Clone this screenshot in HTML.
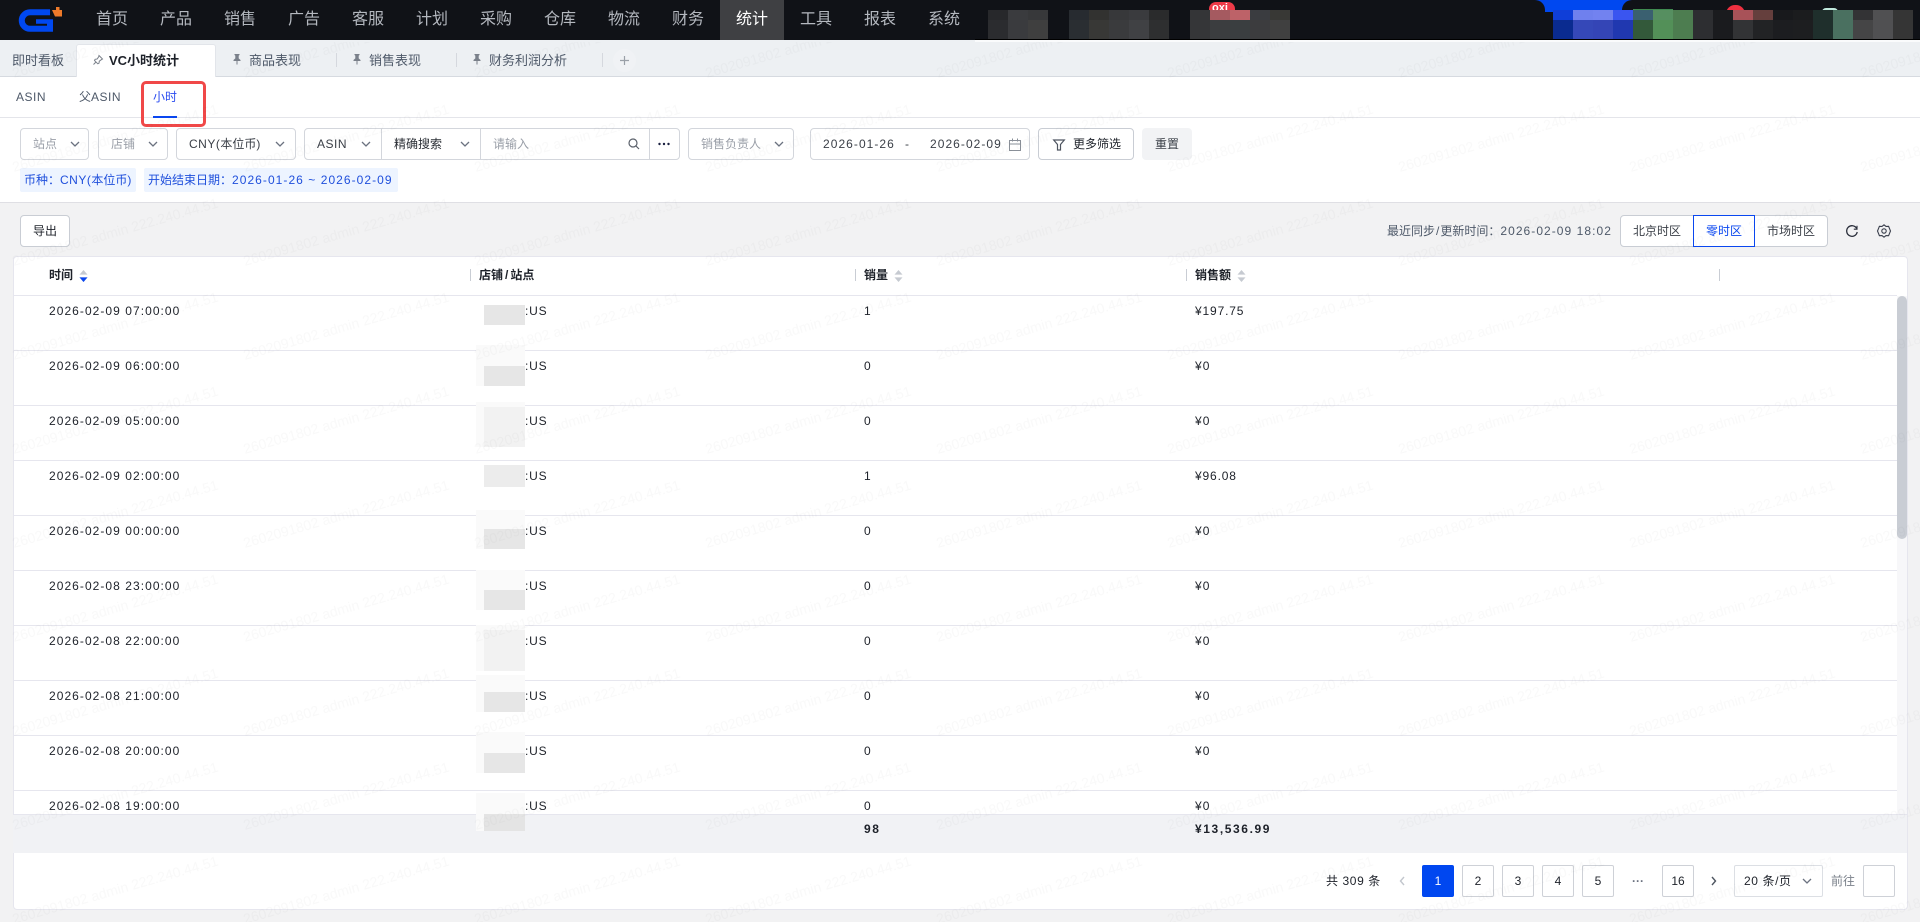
<!DOCTYPE html>
<html lang="zh">
<head>
<meta charset="utf-8">
<title>VC小时统计</title>
<style>
html,body{margin:0;padding:0;width:1920px;height:922px;overflow:hidden;background:#f2f2f3}
body{position:relative;font-family:"Liberation Sans","Noto Sans CJK SC",sans-serif;font-size:12px;color:#1d2129}
.a{position:absolute;box-sizing:border-box}
.t{position:absolute;white-space:nowrap;line-height:16px;font-size:12px}
.m{letter-spacing:1.05px}
.l{letter-spacing:.5px}
.nav{position:absolute;top:0;width:64px;height:40px;line-height:40px;text-align:center;font-size:16px;color:#b4b8bf}
.box{position:absolute;box-sizing:border-box;height:32px;top:128px;background:#fff;border:1px solid #d3d6dc;border-radius:4px}
.ph{color:#9a9fa8}
.tab{position:absolute;top:53px;white-space:nowrap;font-size:13px;line-height:16px;color:#4e5969}
.dv{position:absolute;top:53px;width:1px;height:14px;background:#d5d8de}
.hl{position:absolute;left:13px;width:1884px;height:1px;background:#e6e6ee}
.hd{position:absolute;white-space:nowrap;top:267px;font-weight:700;line-height:16px;font-size:12px;color:#1d2129}
.cd{position:absolute;top:269px;width:1px;height:12px;background:#c9cdd4}
.pg{position:absolute;box-sizing:border-box;top:865px;width:32px;height:32px;line-height:30px;text-align:center;border:1px solid #ced1d7;border-radius:2px;background:#fff;font-size:12px;color:#1d2129}
.g{position:absolute;left:484px;width:41px;height:20px;background:#e6e6e6}
.p{position:absolute;left:476px;width:49px;background:#fafafa}
.u{letter-spacing:.8px}
.q{position:absolute;height:10px;top:10px;width:20px}
.r{position:absolute;height:20px;top:20px;width:20px}
svg{position:absolute;overflow:visible}
</style>
</head>
<body>
<svg width="0" height="0" style="position:absolute">
<defs>
<symbol id="c" viewBox="0 0 12 12"><path d="M2 4l4 4 4-4" fill="none" stroke="#6b7280" stroke-width="1.3"/></symbol>
<symbol id="pin" viewBox="0 0 12 12"><path d="M3.5 1h5v1l-.8.6V5.4L9.5 7v1h-3v3.5h-1V8h-3V7l1.8-1.6V2.6L3.5 2z" fill="#7a808a"/></symbol>
<symbol id="so" viewBox="0 0 9 12"><path d="M4.5 0L8.5 4.6H.5z" fill="#c6cad1"/><path d="M4.5 12L8.5 7.4H.5z" fill="#c6cad1"/></symbol>
</defs>
</svg>

<!-- top nav -->
<div class="a" style="left:0;top:0;width:1920px;height:40px;background:#101217"></div>
<svg style="left:0;top:0" width="80" height="40"><path d="M50 12.3H30a8.25 8.25 0 0 0 0 16.5H50V21" fill="none" stroke="#0048f0" stroke-width="6"/><path d="M36 21.5H53" fill="none" stroke="#0048f0" stroke-width="4.5"/><path d="M56 7h3.5v3h2.5v6.5H55L52 10h4z" fill="#ee7a2a"/></svg>
<div class="nav" style="left:80px">首页</div>
<div class="nav" style="left:144px">产品</div>
<div class="nav" style="left:208px">销售</div>
<div class="nav" style="left:272px">广告</div>
<div class="nav" style="left:336px">客服</div>
<div class="nav" style="left:400px">计划</div>
<div class="nav" style="left:464px">采购</div>
<div class="nav" style="left:528px">仓库</div>
<div class="nav" style="left:592px">物流</div>
<div class="nav" style="left:656px">财务</div>
<div class="nav" style="left:720px;background:#3f4043;color:#fff">统计</div>
<div class="nav" style="left:784px">工具</div>
<div class="nav" style="left:848px">报表</div>
<div class="nav" style="left:912px">系统</div>

<!-- mosaic area -->
<div class="q" style="left:988px;background:#27282b"></div><div class="r" style="left:988px;background:#2b2c2f"></div>
<div class="q" style="left:1008px;background:#3a3b3e"></div><div class="r" style="left:1008px;background:#3a3b3e"></div>
<div class="q" style="left:1028px;background:#37383a"></div><div class="r" style="left:1028px;background:#3f3f3f"></div>
<div class="q" style="left:1069px;background:#272b30"></div><div class="r" style="left:1069px;background:#2a2e32"></div>
<div class="q" style="left:1089px;background:#323230"></div><div class="r" style="left:1089px;background:#383836"></div>
<div class="q" style="left:1109px;background:#37383a"></div><div class="r" style="left:1109px;background:#3a3b3d"></div>
<div class="q" style="left:1129px;background:#3a3b3e"></div><div class="r" style="left:1129px;background:#404144"></div>
<div class="q" style="left:1149px;background:#2a2b2c"></div><div class="r" style="left:1149px;background:#2e2f30"></div>
<div class="a" style="left:1209px;top:2px;width:26px;height:12px;background:#ee3a48;border-radius:7px 7px 0 0"></div>
<div class="t" style="left:1212px;top:2px;color:#fff;font-weight:700;font-size:11px;line-height:12px">oxi</div>
<div class="q" style="left:1190px;background:#343537"></div><div class="r" style="left:1190px;background:#353638"></div>
<div class="q" style="left:1210px;background:#a55a60"></div><div class="r" style="left:1210px;background:#3b3d3f"></div>
<div class="q" style="left:1230px;background:#bd6268"></div><div class="r" style="left:1230px;background:#3a3e40"></div>
<div class="q" style="left:1250px;background:#3a3c40"></div><div class="r" style="left:1250px;background:#3c3c3e"></div>
<div class="q" style="left:1270px;background:#383835"></div><div class="r" style="left:1270px;background:#404040"></div>

<div class="a" style="left:1530px;top:0;width:110px;height:12px;background:#0048f0"></div>
<div class="a" style="left:1520px;top:0;width:25px;height:14px;background:#101217;border-radius:0 10px 0 0"></div>
<div class="a" style="left:1622px;top:0;width:30px;height:14px;background:#101217;border-radius:10px 0 0 0"></div>
<div class="a" style="left:1633px;top:9px;width:40px;height:2px;background:#3f8a50"></div>
<div class="a" style="left:1726px;top:5px;width:19px;height:10px;background:#ee3040;border-radius:9px 9px 0 0"></div>
<div class="a" style="left:1822px;top:8px;width:16px;height:4px;background:#bfe8dc;border-radius:8px 8px 0 0"></div>

<div class="q" style="left:1553px;background:#0f3ed8"></div><div class="r" style="left:1553px;background:#0a2b90"></div>
<div class="q" style="left:1573px;background:#6f80ee"></div><div class="r" style="left:1573px;background:#3548b8"></div>
<div class="q" style="left:1593px;background:#7282f0"></div><div class="r" style="left:1593px;background:#3445b6"></div>
<div class="q" style="left:1613px;background:#3a55f0"></div><div class="r" style="left:1613px;background:#2038b0"></div>
<div class="q" style="left:1633px;background:#3a6070"></div><div class="r" style="left:1633px;background:#33593a"></div>
<div class="q" style="left:1653px;background:#568f60"></div><div class="r" style="left:1653px;background:#539058"></div>
<div class="q" style="left:1673px;background:#4d7d50"></div><div class="r" style="left:1673px;background:#4d7d50"></div>
<div class="q" style="left:1693px;background:#2d2e31"></div><div class="r" style="left:1693px;background:#2d2e31"></div>
<div class="q" style="left:1713px;background:#1a1b1e"></div><div class="r" style="left:1713px;background:#1a1b1e"></div>
<div class="q" style="left:1733px;background:#a85258"></div><div class="r" style="left:1733px;background:#323335"></div>
<div class="q" style="left:1753px;background:#653f3d"></div><div class="r" style="left:1753px;background:#222325"></div>
<div class="q" style="left:1773px;background:#18191c"></div><div class="r" style="left:1773px;background:#1c1d20"></div>
<div class="q" style="left:1793px;background:#1b1c1e"></div><div class="r" style="left:1793px;background:#1d1e20"></div>
<div class="q" style="left:1813px;background:#1f2f2c"></div><div class="r" style="left:1813px;background:#1f2f2c"></div>
<div class="q" style="left:1833px;background:#4a7060"></div><div class="r" style="left:1833px;background:#4a7060"></div>
<div class="q" style="left:1853px;background:#333335"></div><div class="r" style="left:1853px;background:#454546"></div>
<div class="q" style="left:1873px;background:#505052"></div><div class="r" style="left:1873px;background:#505052"></div>
<div class="q" style="left:1893px;background:#353535"></div><div class="r" style="left:1893px;background:#353535"></div>
<div class="a" style="left:975px;top:39px;width:945px;height:1px;background:#000"></div>

<!-- tab bar -->
<div class="a" style="left:0;top:40px;width:1920px;height:37px;background:#edf0f3;border-bottom:1px solid #d6dae0"></div>
<div class="a" style="left:975px;top:40px;width:945px;height:2px;background:#fafbfc"></div>
<div class="tab" style="left:12px">即时看板</div>
<div class="a" style="left:76px;top:44px;width:140px;height:34px;background:#fff;border:1px solid #e2e5ea;border-bottom:none;border-radius:3px 3px 0 0"></div>
<svg style="left:92px;top:54px" width="12" height="12" viewBox="0 0 12 12"><path d="M7 1.5l3.5 3.5-1 .6-2.2 1.6-.3 2-1.2.6L2.5 6.5l.6-1.2 2-.3 1.6-2.2zM4 8l-2.5 2.5" fill="none" stroke="#7a808a" stroke-width="1"/></svg>
<div class="tab" style="left:109px;color:#1d2129;font-weight:700">VC小时统计</div>
<svg style="left:231px;top:53px" width="12" height="12"><use href="#pin"/></svg>
<div class="tab" style="left:249px">商品表现</div>
<div class="dv" style="left:336px"></div>
<svg style="left:351px;top:53px" width="12" height="12"><use href="#pin"/></svg>
<div class="tab" style="left:369px">销售表现</div>
<div class="dv" style="left:456px"></div>
<svg style="left:471px;top:53px" width="12" height="12"><use href="#pin"/></svg>
<div class="tab" style="left:489px">财务利润分析</div>
<div class="dv" style="left:602px"></div>
<div class="a" style="left:613px;top:49px;width:23px;height:23px;border-radius:12px;background:#f0f2f5"></div>
<svg style="left:620px;top:56px" width="9" height="9"><path d="M4.5 0v9M0 4.5h9" stroke="#9aa0a8" stroke-width="1.2"/></svg>

<!-- sub tabs + filter area -->
<div class="a" style="left:0;top:77px;width:1920px;height:126px;background:#fff;border-bottom:1px solid #dfdfe4"></div>
<div class="a" style="left:0;top:117px;width:1920px;height:1px;background:#e4e5ea"></div>
<div class="t l" style="left:16px;top:89px;color:#4e5969">ASIN</div>
<div class="t" style="left:79px;top:89px;color:#4e5969">父<span class="l">ASIN</span></div>
<div class="t" style="left:153px;top:89px;color:#2b4cf0">小时</div>
<div class="a" style="left:153px;top:116px;width:24px;height:2px;background:#0a47f0"></div>
<div class="a" style="left:141px;top:81px;width:65px;height:46px;border:3px solid #f04848;border-radius:5px"></div>

<div class="box" style="left:20px;width:69px"></div>
<div class="t ph" style="left:33px;top:136px">站点</div>
<svg style="left:69px;top:138px" width="12" height="12"><use href="#c"/></svg>
<div class="box" style="left:98px;width:70px"></div>
<div class="t ph" style="left:111px;top:136px">店铺</div>
<svg style="left:147px;top:138px" width="12" height="12"><use href="#c"/></svg>
<div class="box" style="left:176px;width:120px"></div>
<div class="t" style="left:189px;top:136px;color:#3a3f47"><span class="l">CNY(</span>本位币<span class="l">)</span></div>
<svg style="left:274px;top:138px" width="12" height="12"><use href="#c"/></svg>

<div class="box" style="left:304px;width:376px"></div>
<div class="a" style="left:381px;top:128px;width:1px;height:32px;background:#d3d6dc"></div>
<div class="a" style="left:480px;top:128px;width:1px;height:32px;background:#d3d6dc"></div>
<div class="a" style="left:649px;top:128px;width:1px;height:32px;background:#d3d6dc"></div>
<div class="t l" style="left:317px;top:136px;color:#3a3f47">ASIN</div>
<svg style="left:360px;top:138px" width="12" height="12"><use href="#c"/></svg>
<div class="t" style="left:394px;top:136px;color:#2a2e35">精确搜索</div>
<svg style="left:459px;top:138px" width="12" height="12"><use href="#c"/></svg>
<div class="t ph" style="left:493px;top:136px">请输入</div>
<svg style="left:628px;top:138px" width="12" height="12" viewBox="0 0 12 12"><circle cx="5" cy="5" r="4" fill="none" stroke="#5a606a" stroke-width="1.2"/><path d="M8 8l3 3" stroke="#5a606a" stroke-width="1.2"/></svg>
<svg style="left:658px;top:142px" width="12" height="4"><circle cx="1.5" cy="2" r="1.2" fill="#1a2040"/><circle cx="6" cy="2" r="1.2" fill="#1a2040"/><circle cx="10.5" cy="2" r="1.2" fill="#1a2040"/></svg>

<div class="box" style="left:688px;width:106px"></div>
<div class="t ph" style="left:701px;top:136px">销售负责人</div>
<svg style="left:773px;top:138px" width="12" height="12"><use href="#c"/></svg>

<div class="box" style="left:810px;width:220px"></div>
<div class="t m" style="left:823px;top:136px;color:#3a3f47">2026-01-26</div>
<div class="t" style="left:905px;top:136px;color:#3a3f47">-</div>
<div class="t m" style="left:930px;top:136px;color:#3a3f47">2026-02-09</div>
<svg style="left:1009px;top:138px" width="12" height="13" viewBox="0 0 12 13"><path d="M.5 2.5h11v10H.5zM.5 6h11M3.5.5v3M8.5.5v3" fill="none" stroke="#8a9099" stroke-width="1"/></svg>

<div class="box" style="left:1038px;width:96px;border-color:#c9cdd4"></div>
<svg style="left:1053px;top:139px" width="12" height="12" viewBox="0 0 12 12"><path d="M.7 1h10.6L7.5 5.5V11h-3V5.5z" fill="none" stroke="#4e5560" stroke-width="1.2"/></svg>
<div class="t" style="left:1073px;top:136px;color:#1d2129">更多筛选</div>
<div class="a" style="left:1142px;top:128px;width:50px;height:32px;background:#f2f3f5;border-radius:4px"></div>
<div class="t" style="left:1155px;top:136px;color:#3a3f47">重置</div>

<div class="a" style="left:20px;top:168px;width:116px;height:24px;background:#edf4ff;border-radius:2px"></div>
<div class="t" style="left:24px;top:172px;color:#1f4fdc">币种：<span class="l">CNY(</span>本位币<span class="l">)</span></div>
<div class="a" style="left:144px;top:168px;width:254px;height:24px;background:#edf4ff;border-radius:2px"></div>
<div class="t" style="left:148px;top:172px;color:#1f4fdc">开始结束日期：<span class="m">2026-01-26 ~ 2026-02-09</span></div>

<!-- toolbar -->
<div class="a" style="left:20px;top:215px;width:50px;height:32px;background:#fff;border:1px solid #c9cdd4;border-radius:4px"></div>
<div class="t" style="left:33px;top:223px;color:#1d2129">导出</div>
<div class="t" style="left:1387px;top:223px;color:#4e5969">最近同步<span style="margin:0 1px">/</span>更新时间：<span class="m">2026-02-09 18:02</span></div>
<div class="a" style="left:1620px;top:215px;width:208px;height:32px;background:#fff;border:1px solid #c9cdd4;border-radius:4px"></div>
<div class="a" style="left:1693px;top:215px;width:62px;height:32px;border:1px solid #0a47f0"></div>
<div class="t" style="left:1633px;top:223px;color:#3a3f47">北京时区</div>
<div class="t" style="left:1706px;top:223px;color:#0a47f0">零时区</div>
<div class="t" style="left:1767px;top:223px;color:#3a3f47">市场时区</div>
<svg style="left:1846px;top:225px" width="12" height="12" viewBox="0 0 12 12"><path d="M10.6 3.4A5.3 5.3 0 1 0 11.2 7" fill="none" stroke="#2a2e3a" stroke-width="1.3"/><path d="M11 .8v3.4H7.8" fill="none" stroke="#2a2e3a" stroke-width="1.1"/></svg>
<svg style="left:1877px;top:224px" width="14" height="14" viewBox="0 0 14 14"><path d="M7 .8l2 1.6 2.6-.1.9 2.3 1 2.4-1 2.4-.9 2.3-2.6-.1-2 1.6-2-1.6-2.6.1-.9-2.3-1-2.4 1-2.4.9-2.3 2.6.1z" fill="none" stroke="#3a3f4c" stroke-width="1.1"/><circle cx="7" cy="7" r="2.2" fill="none" stroke="#3a3f4c" stroke-width="1.1"/></svg>

<!-- table card -->
<div class="a" style="left:13px;top:256px;width:1895px;height:654px;background:#fff;border:1px solid #e6e6ee;border-radius:4px"></div>
<div class="hd" style="left:49px">时间</div>
<svg style="left:79px;top:270px" width="9" height="12"><use href="#so"/><path d="M4.5 12L8.5 7.4H.5z" fill="#0a47f0"/></svg>
<div class="cd" style="left:470px"></div>
<div class="hd" style="left:479px">店铺<span style="margin:0 2px">/</span>站点</div>
<div class="cd" style="left:855px"></div>
<div class="hd" style="left:864px">销量</div>
<svg style="left:894px;top:270px" width="9" height="12"><use href="#so"/></svg>
<div class="cd" style="left:1186px"></div>
<div class="hd" style="left:1195px">销售额</div>
<svg style="left:1237px;top:270px" width="9" height="12"><use href="#so"/></svg>
<div class="cd" style="left:1719px"></div>

<div class="hl" style="top:295px"></div>
<div class="hl" style="top:350px"></div>
<div class="hl" style="top:405px"></div>
<div class="hl" style="top:460px"></div>
<div class="hl" style="top:515px"></div>
<div class="hl" style="top:570px"></div>
<div class="hl" style="top:625px"></div>
<div class="hl" style="top:680px"></div>
<div class="hl" style="top:735px"></div>
<div class="hl" style="top:790px"></div>

<div class="t m" style="left:49px;top:303px">2026-02-09 07:00:00</div><div class="t m" style="left:864px;top:303px">1</div><div class="t m" style="left:1195px;top:303px;letter-spacing:.85px">¥197.75</div>
<div class="t m" style="left:49px;top:358px">2026-02-09 06:00:00</div><div class="t m" style="left:864px;top:358px">0</div><div class="t m" style="left:1195px;top:358px">¥0</div>
<div class="t m" style="left:49px;top:413px">2026-02-09 05:00:00</div><div class="t m" style="left:864px;top:413px">0</div><div class="t m" style="left:1195px;top:413px">¥0</div>
<div class="t m" style="left:49px;top:468px">2026-02-09 02:00:00</div><div class="t m" style="left:864px;top:468px">1</div><div class="t m" style="left:1195px;top:468px;letter-spacing:.85px">¥96.08</div>
<div class="t m" style="left:49px;top:523px">2026-02-09 00:00:00</div><div class="t m" style="left:864px;top:523px">0</div><div class="t m" style="left:1195px;top:523px">¥0</div>
<div class="t m" style="left:49px;top:578px">2026-02-08 23:00:00</div><div class="t m" style="left:864px;top:578px">0</div><div class="t m" style="left:1195px;top:578px">¥0</div>
<div class="t m" style="left:49px;top:633px">2026-02-08 22:00:00</div><div class="t m" style="left:864px;top:633px">0</div><div class="t m" style="left:1195px;top:633px">¥0</div>
<div class="t m" style="left:49px;top:688px">2026-02-08 21:00:00</div><div class="t m" style="left:864px;top:688px">0</div><div class="t m" style="left:1195px;top:688px">¥0</div>
<div class="t m" style="left:49px;top:743px">2026-02-08 20:00:00</div><div class="t m" style="left:864px;top:743px">0</div><div class="t m" style="left:1195px;top:743px">¥0</div>
<div class="t m" style="left:49px;top:798px">2026-02-08 19:00:00</div><div class="t m" style="left:864px;top:798px">0</div><div class="t m" style="left:1195px;top:798px">¥0</div>

<!-- summary -->
<div class="a" style="left:13px;top:814px;width:1894px;height:39px;background:#f1f2f5;border-top:1px solid #e6e6ee"></div>
<div class="t" style="left:864px;top:821px;font-weight:700;letter-spacing:1.6px">98</div>
<div class="t" style="left:1195px;top:821px;font-weight:700;letter-spacing:1.6px">¥13,536.99</div>

<!-- blurred store names -->
<div class="g" style="top:305px"></div>
<div class="p" style="top:345px;height:41px"></div><div class="g" style="top:366px"></div>
<div class="p" style="top:402px;height:45px"></div><div class="g" style="top:407px;height:40px;background:#f2f2f2"></div>
<div class="g" style="top:465px;height:22px;background:#ececec"></div>
<div class="p" style="top:510px;height:39px"></div><div class="g" style="top:529px"></div>
<div class="p" style="top:570px;height:40px"></div><div class="g" style="top:590px"></div>
<div class="p" style="top:625px;height:46px"></div><div class="g" style="top:630px;height:41px;background:#f2f2f2"></div>
<div class="p" style="top:675px;height:37px"></div><div class="g" style="top:692px"></div>
<div class="p" style="top:732px;height:41px"></div><div class="g" style="top:753px"></div>
<div class="p" style="top:793px;height:38px"></div><div class="g" style="top:814px;height:17px;background:#e4e4e4"></div>

<!-- store suffix -->
<div class="t u" style="left:525px;top:303px">:US</div>
<div class="t u" style="left:525px;top:358px">:US</div>
<div class="t u" style="left:525px;top:413px">:US</div>
<div class="t u" style="left:525px;top:468px">:US</div>
<div class="t u" style="left:525px;top:523px">:US</div>
<div class="t u" style="left:525px;top:578px">:US</div>
<div class="t u" style="left:525px;top:633px">:US</div>
<div class="t u" style="left:525px;top:688px">:US</div>
<div class="t u" style="left:525px;top:743px">:US</div>
<div class="t u" style="left:525px;top:798px">:US</div>

<!-- scrollbar -->
<div class="a" style="left:1897px;top:296px;width:10px;height:518px;background:#f7f7f9"></div>
<div class="a" style="left:1897px;top:296px;width:10px;height:243px;background:#c9cdd4;border-radius:5px"></div>

<!-- pagination -->
<div class="t" style="left:1326px;top:873px;color:#1d2129;letter-spacing:.6px">共 309 条</div>
<svg style="left:1399px;top:876px" width="6" height="10"><path d="M5 1L1.5 5 5 9" fill="none" stroke="#c2c6cd" stroke-width="1.4"/></svg>
<div class="pg" style="left:1422px;background:#0047f0;border-color:#0047f0;color:#fff">1</div>
<div class="pg" style="left:1462px">2</div>
<div class="pg" style="left:1502px">3</div>
<div class="pg" style="left:1542px">4</div>
<div class="pg" style="left:1582px">5</div>
<div class="t" style="left:1632px;top:873px;color:#6b7280;font-weight:700">···</div>
<div class="pg" style="left:1662px">16</div>
<svg style="left:1711px;top:876px" width="6" height="10"><path d="M1 1l3.5 4L1 9" fill="none" stroke="#4e5560" stroke-width="1.4"/></svg>
<div class="pg" style="left:1734px;width:89px;border-color:#dcdfe4"></div>
<div class="t" style="left:1744px;top:873px;letter-spacing:.6px">20 条/页</div>
<svg style="left:1801px;top:875px" width="12" height="12"><use href="#c"/></svg>
<div class="t" style="left:1831px;top:873px;color:#7a808a">前往</div>
<div class="pg" style="left:1863px"></div>

<!-- watermark overlay -->
<svg style="left:0;top:0;pointer-events:none" width="1920" height="922">
<defs>
<pattern id="w" x="0" y="0" width="231" height="94" patternUnits="userSpaceOnUse">
<text x="14" y="78" transform="rotate(-16 14 78)" font-family="Liberation Sans, sans-serif" font-size="14" fill="#000" fill-opacity=".025">2602091802 admin 222.240.44.51</text>
</pattern>
</defs>
<rect x="0" y="42" width="1920" height="880" fill="url(#w)"/>
</svg>
</body>
</html>
